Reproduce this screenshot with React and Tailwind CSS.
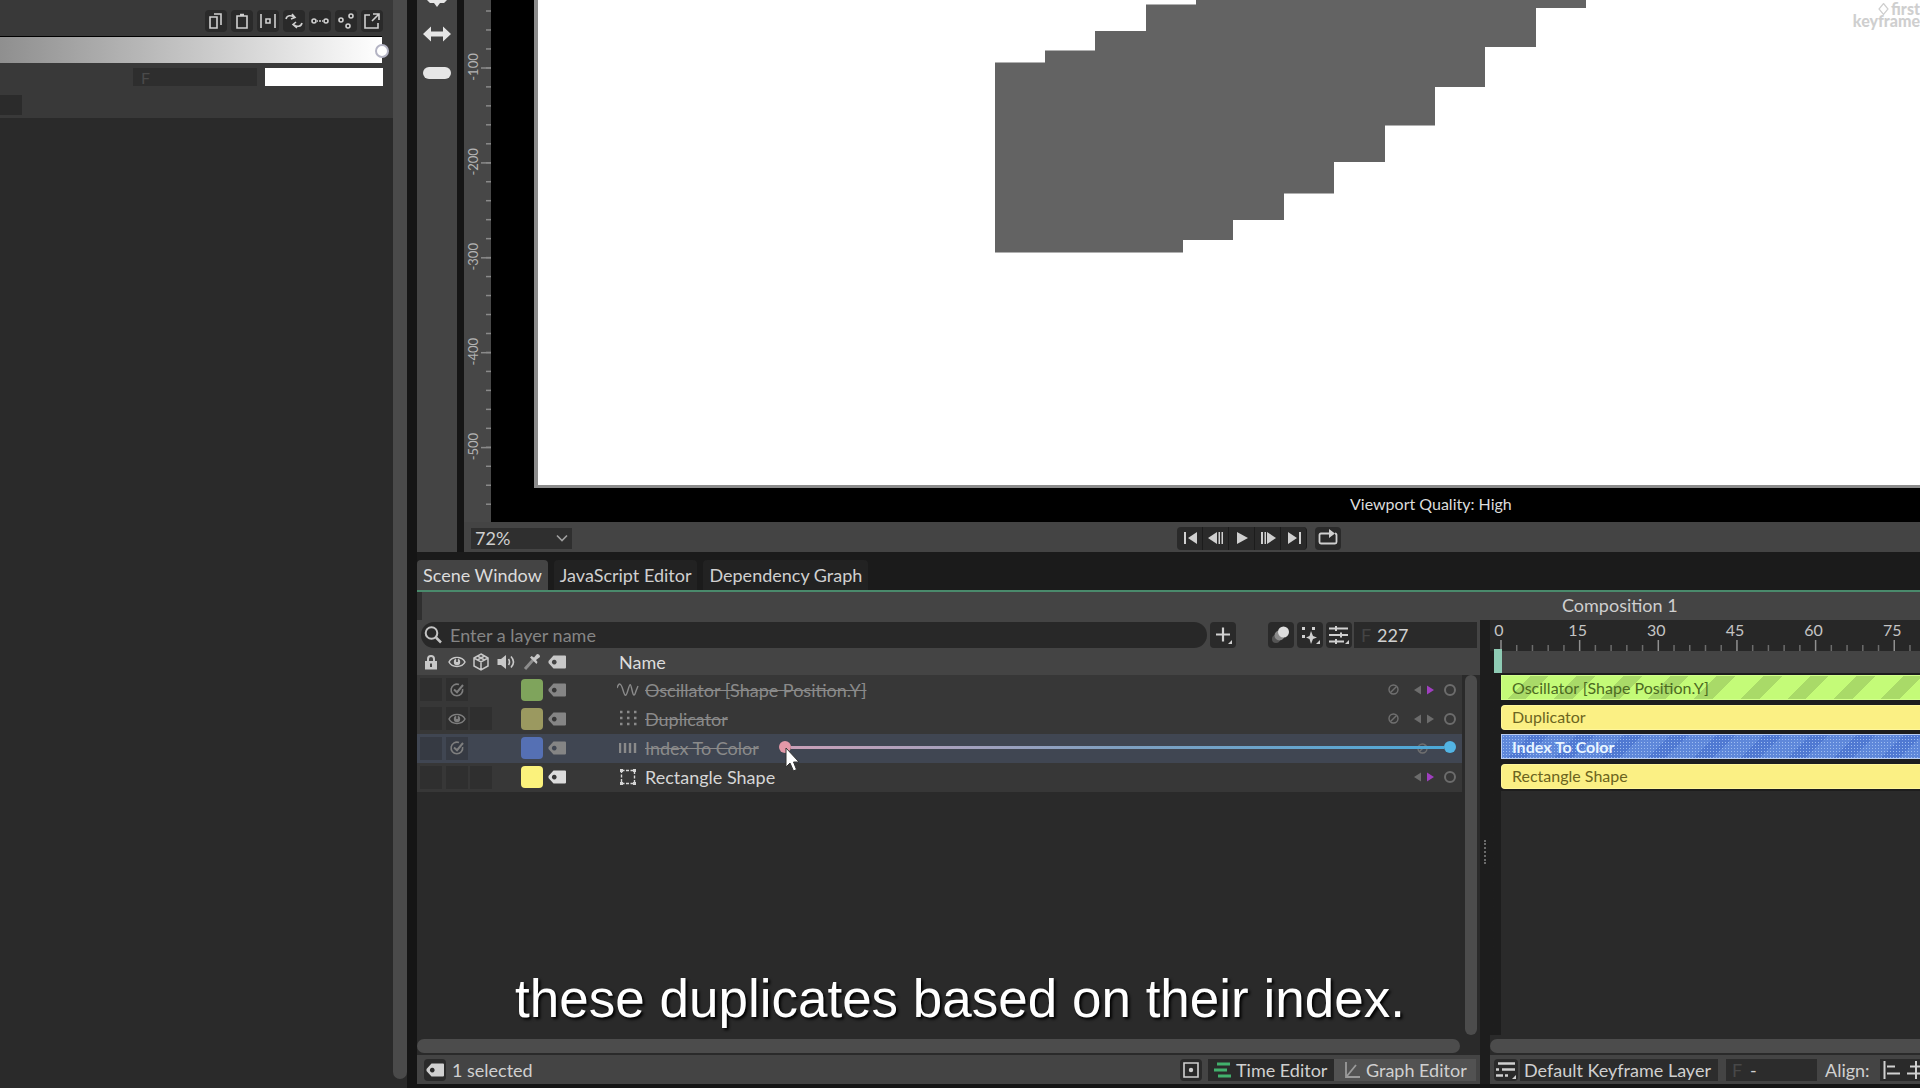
import { useState } from "react";

const bars = {
  green:
    "bg-[repeating-linear-gradient(135deg,#c4fb78_0px,#c4fb78_20px,#a9da68_20px,#a9da68_33px)] text-[#4c6a22] border-[#d2ff8c]",
  yellow: "bg-[#fbf084] text-[#6b6420] border-[#fff69a] rounded-l-sm",
  blue: "bg-[radial-gradient(#9dbdf2_0.8px,transparent_1px),repeating-linear-gradient(135deg,#5f88da_0px,#5f88da_20px,#5079d2_20px,#5079d2_33px)] bg-[length:3px_3px,auto] text-[#e8f5ff] font-bold border-[#b9cdf2]",
};

const layers = [
  {
    name: "Oscillator [Shape Position.Y]",
    icon: "wave",
    swatch: "bg-[#7fa45c]",
    bar: bars.green,
    off: true,
    eye: "check",
    boxes: 2,
    mute: true,
    arrows: "text-[#a03fc0]",
  },
  {
    name: "Duplicator",
    icon: "dots",
    swatch: "bg-[#9b9960]",
    bar: bars.yellow,
    off: true,
    eye: "eye",
    boxes: 3,
    mute: true,
    arrows: "text-[#6c6c6c]",
  },
  {
    name: "Index To Color",
    icon: "bars",
    swatch: "bg-[#5570b4]",
    bar: bars.blue,
    off: true,
    eye: "check",
    boxes: 2,
    mute: true,
    selected: true,
  },
  {
    name: "Rectangle Shape",
    icon: "rect",
    swatch: "bg-[#fbf27c]",
    bar: bars.yellow,
    boxes: 3,
    arrows: "text-[#a03fc0]",
  },
];

function Icon({ children, w = 18, h = 18, className = "", sw = 2 }) {
  return (
    <svg
      width={w}
      height={h}
      viewBox={`0 0 ${w} ${h}`}
      fill="none"
      stroke="currentColor"
      strokeWidth={sw}
      className={`shrink-0 ${className}`}
      aria-hidden="true"
    >
      {children}
    </svg>
  );
}

function TagIcon({ className = "" }) {
  return (
    <Icon h={14} className={className}>
      <path
        d="M5.5 0.5H17a1 1 0 0 1 1 1v11a1 1 0 0 1-1 1H5.5L0.5 8V6Zm.7 4.2a2.4 2.4 0 1 0 .1 0Z"
        fill="currentColor"
        fillRule="evenodd"
        stroke="none"
      />
    </Icon>
  );
}

function EyeIcon({ className = "" }) {
  return (
    <Icon h={14} className={className} sw={1.5}>
      <path d="M1 7C4 1 14 1 17 7C14 13 4 13 1 7Z" />
      <circle cx="9" cy="7" r="3.2" fill="currentColor" stroke="none" />
      <path d="M9 3V7" stroke="#333" />
    </Icon>
  );
}

function CheckIcon() {
  return (
    <Icon w={16} h={16} sw={1.6} className="text-[#7e7e7e]">
      <path d="M13.6 7A5.8 5.8 0 1 1 10 2.6" />
      <path d="M5 7.5L8 10.2L14 3" strokeWidth="2" />
    </Icon>
  );
}

function LayerIcon({ type }) {
  if (type === "wave")
    return (
      <Icon w={22} h={16} sw={1.4} className="-ml-[2px]">
        <path d="M0 6C2 0 4 1 6 8C8 15 9 15 11 8C13 1 13.500 1 15 8C16.500 15 17.500 14 19 9L21 4" />
      </Icon>
    );
  if (type === "dots")
    return (
      <Icon>
        <path d="M1 2H18M1 8H18M1 14H18" strokeDasharray="2.5 4.5" strokeWidth="2.5" />
      </Icon>
    );
  if (type === "bars")
    return (
      <Icon h={12} sw={2.4}>
        <path d="M1 1V11M6 1V11M11 1V11M16 1V11" />
      </Icon>
    );
  return (
    <Icon sw={1.4}>
      <rect x="2.5" y="2.5" width="13" height="13" strokeDasharray="3 1.5" />
      <path d="M1 1H4V4H1ZM14 1H17V4H14ZM1 14H4V17H1ZM14 14H17V17H14Z" fill="currentColor" stroke="none" />
    </Icon>
  );
}

function MuteIcon() {
  return (
    <Icon w={11} h={11} sw={1.4} className="text-[#707070]">
      <circle cx="5.5" cy="5.5" r="4.5" />
      <path d="M2.5 8.5L8.5 2.5" />
    </Icon>
  );
}

function IconButton({ label, className = "", children }) {
  return (
    <button
      type="button"
      aria-label={label}
      className={`flex items-center justify-center bg-[#2a2a2a] text-[#d0d0d0] ${className}`}
    >
      {children}
    </button>
  );
}

function GradientPanel() {
  const tools = [
    ["Copy", "M7 2H14V13M3 5H10V16H3Z"],
    ["Paste", "M4 4H14V16H4ZM7 2.5H11"],
    ["Distribute", "M2 2V16M16 2V16M7 7H11V11H7Z"],
    ["Swap", "M1 7C2 3 6 3 9 5M7 2L10 5.500L6 7M17 11C16 15 12 15 9 13M11 10L8 12.500L12 16"],
    ["Space evenly", "M1 9a2 2 0 1 0 4 0a2 2 0 1 0-4 0M13 9a2 2 0 1 0 4 0a2 2 0 1 0-4 0M8 9H10M6 9H7M11 9H12"],
    ["Scatter", "M2 8a2 2 0 1 0 4 0a2 2 0 1 0-4 0M12 4a2 2 0 1 0 4 0a2 2 0 1 0-4 0M9 14a2 2 0 1 0 4 0a2 2 0 1 0-4 0"],
    ["Open", "M7 3H2V16H15V11M10 2H16V8M16 2L9 9"],
  ];
  return (
    <aside className="flex w-[407px] shrink-0 bg-[#2a2a2a] pb-[9px]">
      <div className="min-w-0 flex-1">
        <div className="h-[118px] bg-[#393939]">
          <div className="flex h-9 items-center justify-end gap-1 pt-[6px] pr-[10px]">
            {tools.map(([label, d]) => (
              <IconButton key={label} label={label} className="h-[22px] w-[22px] rounded-sm">
                <Icon sw={1.6}>
                  <path d={d} />
                </Icon>
              </IconButton>
            ))}
          </div>
          <div className="relative mr-[11px] h-[27px] border-t border-black bg-linear-to-r from-[#8f8f8f] to-white">
            <button
              type="button"
              aria-label="Color stop"
              className="absolute top-[7px] -right-[7px] h-[14px] w-[14px] rounded-full border-2 border-[#b4b4c4] bg-white"
            />
          </div>
          <div className="mt-[5px] mr-[10px] flex h-[18px] justify-end gap-2">
            <input
              aria-label="Stop position"
              placeholder="F"
              className="w-[124px] bg-[#2e2e2e] px-2 text-base leading-none placeholder:text-[#4a4a4a]"
            />
            <button type="button" aria-label="Stop color" className="w-[118px] bg-white" />
          </div>
          <input
            type="checkbox"
            aria-label="Interpolate"
            className="mt-[9px] block h-[20px] w-[22px] appearance-none bg-[#2b2b2b]"
          />
        </div>
      </div>
      <div className="w-[14px] rounded-b-full bg-[#4a4a4a]" />
    </aside>
  );
}

function ToolStrip() {
  return (
    <div className="flex w-10 shrink-0 flex-col items-center bg-[#444] text-[#e6e6e6]">
      <Icon w={20} h={8}>
        <path d="M0 0H20L17 3L13 3L10 7L7 3L3 3Z" fill="currentColor" stroke="none" />
      </Icon>
      <Icon w={28} h={18} className="mt-[17px]">
        <path d="M0 9L8 1.500V6.500H20V1.500L28 9L20 16.500V11.500H8V16.500Z" fill="currentColor" stroke="none" />
      </Icon>
      <div className="mt-6 h-3 w-7 rounded-full bg-[#e6e6e6]" />
    </div>
  );
}

function VerticalRuler() {
  const major = [-100, -200, -300, -400, -500];
  return (
    <svg width="27" height="522" className="shrink-0 bg-[#474747]" aria-hidden="true">
      {Array.from({ length: 27 }, (_, i) => (
        <path key={i} d={`M22 ${11 + i * 18.97}H27`} stroke="#8a8a8a" strokeWidth="1.5" />
      ))}
      {major.map((n, i) => (
        <g key={n}>
          <path d={`M17 ${68 + i * 94.9}H27`} stroke="#8a8a8a" strokeWidth="1.5" />
          <text
            transform={`translate(14 ${67 + i * 94.9}) rotate(-90)`}
            textAnchor="middle"
            fill="#b4b4b4"
            className="font-[Lato] text-[13px]"
          >
            {n}
          </text>
        </g>
      ))}
    </svg>
  );
}

function Stage() {
  return (
    <div className="flex min-w-0 flex-1 flex-col bg-black pl-[43px]">
      <div className="flex min-h-0 flex-1 items-start justify-between overflow-hidden border-b-[3px] border-l-4 border-[#8c8c8c] bg-white">
        <svg width="1049" height="254" className="shrink-0">
          <path
            d="M457 252.500V62.500H507V50.500H557V31H608V4.500H658V0H1048V8H998V47H947V87H897V125.500H847V162H796V193.500H746V220H695V240H645V252.500Z"
            fill="#636363"
          />
        </svg>
        <p className="pt-[3px] text-right text-base leading-[12px] font-black text-[#cfcfcf]">
          <Icon w={11} h={12} sw={1.2} className="mr-[2px] inline align-top">
            <path d="M5.500 0.500L10 6L5.500 11.500L1 6Z" />
          </Icon>
          first
          <br />
          keyframe
        </p>
      </div>
      <p className="h-[34px] pl-[816px] text-base leading-[32px] text-[#dcdcdc]">Viewport Quality: High</p>
    </div>
  );
}

function PlayBar() {
  const shapes = [
    ["First frame", "M3 3V15H5V3ZM16 3V15L7 9Z"],
    ["Previous frame", "M10 3V15L1 9ZM11.500 3V15H13V3ZM14.500 3V15H16V3Z"],
    ["Play", "M4 3L15 9L4 15Z"],
    ["Next frame", "M2 3V15H4V3ZM5.500 3V15H7V3ZM8 3L17 9L8 15Z"],
    ["Last frame", "M3 3L12 9L3 15ZM14 3V15H16V3Z"],
  ];
  return (
    <div className="flex h-[30px] items-center bg-[#444] pt-[2px] pl-[7px]">
      <div className="relative flex items-center">
        <select
          aria-label="Zoom"
          className="h-[21px] w-[101px] appearance-none bg-[#2f2f2f] pl-1 text-lg leading-none text-[#cfcfcf]"
        >
          <option>72%</option>
        </select>
        <Icon w={12} h={8} sw={1.6} className="pointer-events-none absolute right-1 text-[#a0a0a0]">
          <path d="M1 1.500L6 6.500L11 1.500" />
        </Icon>
      </div>
      <div className="ml-[605px] flex">
        {shapes.map(([label, d]) => (
          <IconButton key={label} label={label} className="h-[23px] w-[26px] border-r border-[#1c1c1c] first:rounded-l last:rounded-r">
            <Icon>
              <path d={d} fill="currentColor" stroke="none" />
            </Icon>
          </IconButton>
        ))}
      </div>
      <IconButton label="Loop" className="ml-2 h-[23px] w-[26px] rounded">
        <Icon w={20} sw={1.8}>
          <path d="M8 4.500H3Q1.500 4.500 1.500 6V13Q1.500 14.500 3 14.500H17Q18.500 14.500 18.500 13V6Q18.500 4.500 17 4.500" />
          <path d="M8 3.600H11V0L17 4.500L11 9V5.400H8Z" fill="currentColor" stroke="none" />
        </Icon>
      </IconButton>
    </div>
  );
}

function Tabs() {
  const [tab, setTab] = useState("Scene Window");
  return (
    <nav className="flex border-b-2 border-[#4a8a6c] bg-[#1b1b1b] pt-2">
      {["Scene Window", "JavaScript Editor", "Dependency Graph"].map((name) => (
        <button
          key={name}
          type="button"
          onClick={() => setTab(name)}
          className={`mr-[6px] h-[30px] rounded-t px-[6px] pb-px text-lg leading-none ${
            tab === name ? "bg-[#444] text-[#dcdcdc]" : "bg-[#222] text-[#d0d0d0]"
          }`}
        >
          {name}
        </button>
      ))}
    </nav>
  );
}

function LayerRow({ layer }) {
  const cells = [null, layer.eye, null];
  return (
    <tr className={layer.selected ? "relative z-10 bg-[#404652]" : "bg-[#373737]"}>
      {cells.map((eye, i) => (
        <td key={i} className="p-0">
          <div
            className={`mx-auto flex h-[23px] w-[22px] items-center justify-center ${
              i < layer.boxes ? (layer.selected ? "bg-[#363a43]" : "bg-[#2f2f2f]") : ""
            }`}
          >
            {eye === "check" && <CheckIcon />}
            {eye === "eye" && <EyeIcon className="text-[#7e7e7e]" />}
          </div>
        </td>
      ))}
      <td className="p-0" />
      <td className="p-0">
        <div className={`mx-auto h-[22px] w-[22px] rounded-sm ${layer.swatch}`} />
      </td>
      <td className="p-0">
        <TagIcon className={`mx-auto ${layer.off ? "text-[#858585]" : "text-[#dcdcdc]"}`} />
      </td>
      <td className={`p-0 pl-[49px] ${layer.off ? "text-[#8a8a8a]" : "text-[#d6d6d6]"}`}>
        <div className="flex items-center">
          <span className="flex w-[26px]">
            <LayerIcon type={layer.icon} />
          </span>
          <span className={`leading-none ${layer.off ? "line-through" : ""}`}>{layer.name}</span>
        </div>
        {layer.selected && (
          <div className="absolute top-1/2 right-[6px] left-[362px] -mt-[7px] flex h-3 items-center">
            <span className="h-3 w-3 rounded-full bg-[#e398a8]" />
            <span className="h-[3px] flex-1 bg-linear-to-r from-[#c9a0b8] via-[#7f9fc0] to-[#4aa8d8]" />
            <span className="h-3 w-3 rounded-full bg-[#52b4e4]" />
            <svg width="16" height="26" className="absolute top-[6px] left-[6px]">
              <path d="M1 1V20L5 16L8.500 24L11.500 22.500L8.500 15H14Z" fill="#fff" stroke="#333" />
            </svg>
          </div>
        )}
      </td>
      <td className="p-0 pr-[6px]">
        <div className="flex items-center justify-end">
          {layer.mute && <MuteIcon />}
          <span className={`flex justify-between ${layer.selected ? "w-4" : "mr-[9px] ml-[14px] w-[22px]"}`}>
            {!layer.selected && (
              <>
                <Icon w={8} h={10} className="text-[#6c6c6c]">
                  <path d="M8 0.500V9.500L1 5Z" fill="currentColor" stroke="none" />
                </Icon>
                <Icon w={8} h={10} className={layer.arrows}>
                  <path d="M0 0.500V9.500L7 5Z" fill="currentColor" stroke="none" />
                </Icon>
              </>
            )}
          </span>
          <span className={`h-3 w-3 rounded-full border-2 ${layer.selected ? "border-transparent" : "border-[#6c6c6c]"}`} />
        </div>
      </td>
    </tr>
  );
}

function LayerTable() {
  return (
    <table className="h-[143px] w-full table-fixed border-collapse text-left text-lg leading-none">
      <colgroup>
        <col className="w-[28px]" />
        <col className="w-[23px]" />
        <col className="w-[25px]" />
        <col className="w-[26px]" />
        <col className="w-[25px]" />
        <col className="w-[26px]" />
        <col />
        <col className="w-[90px]" />
      </colgroup>
      <thead>
        <tr className="h-[26px] bg-[#444] text-[#c8c8c8]">
          <th aria-label="Lock" className="p-0">
            <Icon w={14} h={16} className="mx-auto">
              <path d="M4 8V5A3 3 0 0 1 10 5V8" />
              <path d="M1 7H13V15.500H1ZM6 9.500V13H8V9.500Z" fill="currentColor" fillRule="evenodd" stroke="none" />
            </Icon>
          </th>
          <th aria-label="Visible" className="p-0">
            <EyeIcon className="mx-auto" />
          </th>
          <th aria-label="3D" className="p-0">
            <Icon sw={1.5} className="mx-auto">
              <path d="M9 1L16 5V13L9 17L2 13V5ZM2 5L9 9L16 5M9 9V17M5.500 3L12.500 7M12.500 3L5.500 7" />
            </Icon>
          </th>
          <th aria-label="Audio" className="p-0">
            <Icon w={19} h={16} sw={1.6} className="mx-auto">
              <path d="M0.500 5H4L9 1V15L4 11H0.500Z" fill="currentColor" stroke="none" />
              <path d="M11.500 5Q13.500 8 11.500 11M14 2.500Q19 8 14 13.500" />
            </Icon>
          </th>
          <th aria-label="Color" className="p-0">
            <Icon className="mx-auto">
              <path d="M2 16L10 7" stroke="#8c8c8c" strokeWidth="3" />
              <path d="M7 4.500L13.500 11L14.500 9L13 7L17 4Q17 1 14 1L11 4.500L8.500 3Z" fill="currentColor" stroke="none" />
            </Icon>
          </th>
          <th aria-label="Tag" className="p-0">
            <TagIcon className="mx-auto" />
          </th>
          <th className="p-0 pl-[49px] font-normal text-[#dcdcdc]">Name</th>
          <th aria-label="Connections" className="p-0" />
        </tr>
      </thead>
      <tbody>
        {layers.map((layer) => (
          <LayerRow key={layer.name} layer={layer} />
        ))}
      </tbody>
    </table>
  );
}

function SearchRow() {
  return (
    <div className="flex h-[29px] items-center bg-[#444] pr-[3px] pl-1">
      <div className="flex h-[26px] flex-1 items-center gap-2 rounded-full bg-[#282828] pl-[3px]">
        <Icon className="text-[#c4c4c4]">
          <circle cx="7.500" cy="7" r="5.800" />
          <path d="M12 11.500L17 16.500" strokeWidth="2.500" />
        </Icon>
        <input
          aria-label="Search layers"
          placeholder="Enter a layer name"
          className="min-w-0 flex-1 bg-transparent text-lg leading-none outline-none placeholder:text-[#858585]"
        />
      </div>
      <IconButton label="Add layer" className="ml-[3px] h-[26px] w-[26px] rounded">
        <Icon w={20} h={20} sw={2.2}>
          <path d="M10 2.500V16.500M3 9.500H17" />
          <path d="M19 15V19H15Z" fill="currentColor" stroke="none" />
        </Icon>
      </IconButton>
      <div className="ml-8 flex gap-[3px]">
        <IconButton label="Motion blur" className="h-[26px] w-[26px] rounded">
          <Icon w={20} h={20}>
            <circle cx="5" cy="14" r="4" fill="#555" stroke="none" />
            <circle cx="8.500" cy="10.500" r="5" fill="#8a8a8a" stroke="none" />
            <circle cx="12.500" cy="7" r="5.500" fill="#dedede" stroke="none" />
          </Icon>
        </IconButton>
        <IconButton label="Effects" className="h-[26px] w-[26px] rounded">
          <Icon w={20} h={20}>
            <path
              d="M2 2H5V5H2ZM12 2H15V5H12ZM2 10H5V13H2ZM11 6L13 11L17 12.500L13 14L11 19L9.500 14L6 12.500L9.500 11ZM20 15V19H16Z"
              fill="currentColor"
              stroke="none"
            />
          </Icon>
        </IconButton>
        <IconButton label="Filters" className="h-[26px] w-[26px] rounded">
          <Icon w={20} h={20}>
            <path d="M0 3.500H19M0 10H19M0 16.500H15M7 1V6M12 7.500V12.500M7 14V19" />
            <path d="M20 15V19H16Z" fill="currentColor" stroke="none" />
          </Icon>
        </IconButton>
      </div>
      <label className="ml-[2px] flex h-[26px] w-[123px] items-center bg-[#2a2a2a] text-lg text-[#444]">
        <span className="w-[23px] pl-[7px]">F</span>
        <input
          aria-label="Frame"
          defaultValue="227"
          className="min-w-0 flex-1 bg-transparent leading-none text-[#d0d0d0] outline-none"
        />
      </label>
    </div>
  );
}

function SceneList() {
  return (
    <section className="flex min-w-0 flex-[1063] flex-col bg-[#2a2a2a]">
      <SearchRow />
      <div className="flex min-h-0 flex-1">
        <div className="min-w-0 flex-1">
          <LayerTable />
        </div>
        <div className="flex w-[18px] flex-col">
          <div className="h-[26px] bg-[#444]" />
          <div className="mx-[3px] flex-1 rounded-full bg-[#4c4c4c]" />
        </div>
      </div>
      <div className="mt-1 mr-5 h-[14px] rounded-full bg-[#4c4c4c]" />
      <div className="mt-[2px] flex h-[29px] items-center bg-[#444] pr-[4px] pl-[7px] text-[#d0d0d0]">
        <IconButton label="Tags" className="h-[22px] w-[22px] rounded">
          <TagIcon />
        </IconButton>
        <p className="flex-1 pl-[6px] text-lg leading-none">1 selected</p>
        <IconButton label="Record" className="mr-[6px] h-[22px] w-[22px] rounded">
          <Icon sw={1.6}>
            <path d="M2 2H16V16H2Z" />
            <circle cx="9" cy="9" r="2.200" fill="currentColor" stroke="none" />
          </Icon>
        </IconButton>
        <button type="button" className="flex h-[22px] w-[126px] items-center gap-[5px] bg-[#2a2a2a] pl-[6px] text-lg leading-none">
          <Icon w={17} sw={3} className="text-[#42b06c]">
            <path d="M3 3H16M0 9H13M4 15H17" />
          </Icon>
          Time Editor
        </button>
        <button type="button" className="flex h-[22px] w-[142px] items-center gap-[5px] bg-[#525252] pl-[10px] text-lg leading-none">
          <Icon w={17} sw={1.800} className="text-[#9a9a9a]">
            <path d="M2 1V16H16M3 15L12 4" />
          </Icon>
          Graph Editor
        </button>
      </div>
    </section>
  );
}

function TimeRuler() {
  return (
    <svg width="430" height="31" className="shrink-0" aria-hidden="true">
      {Array.from({ length: 27 }, (_, i) => (
        <path
          key={i}
          d={`M${11 + i * 15.73} ${i % 5 ? 25 : 20}V31`}
          stroke={i % 5 ? "#6c6c6c" : "#909090"}
          strokeWidth="1.500"
        />
      ))}
      {[0, 15, 30, 45, 60, 75].map((n, i) => (
        <text
          key={n}
          x={9 + i * 78.65}
          y="16"
          textAnchor="middle"
          fill="#c4c4c4"
          className="font-[Lato] text-base"
        >
          {n}
        </text>
      ))}
    </svg>
  );
}

function Timeline() {
  return (
    <section className="flex min-w-0 flex-[440] overflow-hidden">
      <div className="flex w-[10px] shrink-0 items-center justify-center bg-[#1d1d1d]">
        <div className="h-6 border-l-2 border-dotted border-[#6a6a6a]" />
      </div>
      <div className="flex min-w-0 flex-1 flex-col bg-[#2a2a2a]">
        <div className="flex min-h-0 flex-1 flex-col overflow-hidden bg-linear-to-r from-[#1d1d1d] from-[11px] to-[#2a2a2a] to-[11px]">
          <div className="flex h-[31px] bg-[#272727]">
            <TimeRuler />
          </div>
          <div className="relative ml-[11px] h-[22px] bg-[#444]">
            <div className="absolute -top-[2px] -left-[7px] h-6 w-2 bg-[#8ecbb4]" />
          </div>
          <div className="ml-[11px] grid h-[118px] grid-rows-4 items-center bg-[#1d1d1d]">
            {layers.map((layer) => (
              <div
                key={layer.name}
                className={`flex h-[25px] items-center border-y border-l pl-[10px] text-base leading-none ${layer.bar}`}
              >
                {layer.name}
              </div>
            ))}
          </div>
        </div>
        <div className="mt-1 h-[14px] rounded-l-full bg-[#4c4c4c]" />
        <div className="mt-[2px] flex h-[29px] items-center overflow-hidden bg-[#444] pl-1 text-lg leading-none whitespace-nowrap text-[#d0d0d0]">
          <IconButton label="Layer options" className="h-[22px] w-[24px] shrink-0 rounded">
            <Icon w={20}>
              <path d="M2 2.500H19M0 8.500H3M6 8.500H19M0 14.500H7M9 14.500H12" strokeWidth="2.500" />
              <path d="M20 14V18H16Z" fill="currentColor" stroke="none" />
            </Icon>
          </IconButton>
          <button type="button" className="ml-[2px] h-[22px] w-[198px] shrink-0 bg-[#2c2c2c] pl-1 text-left">
            Default Keyframe Layer
          </button>
          <label className="ml-[8px] flex h-[22px] w-[91px] shrink-0 items-center bg-[#2c2c2c] pl-[6px] text-[#484848]">
            <span className="w-[18px]">F</span>
            <input aria-label="Keyframe value" defaultValue="-" className="w-10 bg-transparent text-[#d0d0d0]" />
          </label>
          <span className="ml-2 w-[55px] shrink-0">Align:</span>
          <IconButton label="Align left" className="h-[22px] w-[23px] shrink-0">
            <Icon>
              <path d="M1.500 0V18M4 5.500H12M4 12.500H17" />
            </Icon>
          </IconButton>
          <IconButton label="Align center" className="h-[22px] w-[23px] shrink-0">
            <Icon>
              <path d="M10 0V18M4 5.500H16M1 12.500H18" />
            </Icon>
          </IconButton>
        </div>
      </div>
    </section>
  );
}

export default function App() {
  return (
    <div className="relative flex h-screen gap-[10px] overflow-hidden bg-[#151515] font-[Lato,sans-serif]">
      <GradientPanel />
      <main className="flex min-w-0 flex-1 flex-col pb-1">
        <div className="flex min-h-0 flex-[552] basis-0 gap-[7px]">
          <ToolStrip />
          <div className="flex min-w-0 flex-1 flex-col">
            <div className="flex min-h-0 flex-1 overflow-hidden">
              <VerticalRuler />
              <Stage />
            </div>
            <PlayBar />
          </div>
        </div>
        <div className="flex min-h-0 flex-[532] basis-0 flex-col">
          <Tabs />
          <header className="flex h-7 bg-[#444] text-lg leading-[27px] text-[#cfcfcf]">
            <div className="min-w-0 flex-[1063]">
              <div className="h-full w-[5px] bg-[#2f2f2f]" />
            </div>
            <div className="min-w-0 flex-[440]">
              <h1 className="pl-[82px]">Composition 1</h1>
            </div>
          </header>
          <div className="flex min-h-0 flex-1">
            <SceneList />
            <Timeline />
          </div>
        </div>
      </main>
      <p className="pointer-events-none absolute inset-x-0 bottom-[59px] text-center font-['Liberation_Sans',sans-serif] text-[53px] leading-[60px] text-white [text-shadow:2px_2px_3px_#000]">
        these duplicates based on their index.
      </p>
    </div>
  );
}
